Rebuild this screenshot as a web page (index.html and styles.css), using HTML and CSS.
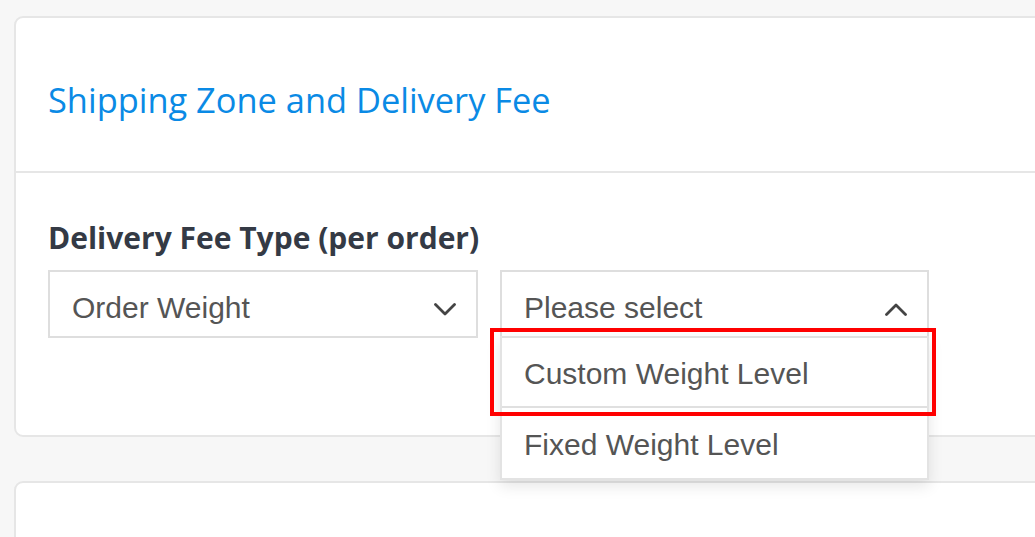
FILE: index.html
```html
<!DOCTYPE html>
<html>
<head>
<meta charset="utf-8">
<link rel="stylesheet" href="styles.css">
</head>
<body>
<div class="page">
  <section class="card">
    <header class="card-header">
      <h2 class="title">Shipping Zone and Delivery Fee</h2>
    </header>
    <div class="card-body">
      <div class="label">Delivery Fee Type (per order)</div>
      <div class="selects">
        <div class="select">
          <span class="select-text">Order Weight</span>
          <svg class="chev" width="22" height="13" viewBox="0 0 22 13"><polyline points="1.5,1.5 11,11 20.5,1.5" fill="none" stroke="#444" stroke-width="2.8" stroke-linecap="round" stroke-linejoin="round"/></svg>
        </div>
        <div class="select open">
          <span class="select-text">Please select</span>
          <svg class="chev" width="22" height="13" viewBox="0 0 22 13"><polyline points="1.5,11.5 11,2 20.5,11.5" fill="none" stroke="#444" stroke-width="2.8" stroke-linecap="round" stroke-linejoin="round"/></svg>
          <ul class="menu">
            <li class="menu-item active">Custom Weight Level</li>
            <li class="menu-item">Fixed Weight Level</li>
          </ul>
          <div class="highlight"></div>
        </div>
      </div>
    </div>
  </section>
  <section class="card card-next"></section>
</div>
</body>
</html>
```

FILE: styles.css
```css
html, body {
  margin: 0;
  padding: 0;
  background: #f7f7f7;
  overflow: hidden;
  height: 537px;
}
.page {
  padding: 16px 0 0 14px;
  width: 1100px;
}
.card {
  background: #fff;
  border: 2px solid #e6e6e6;
  border-radius: 9px;
  width: 1080px;
  box-sizing: border-box;
}
.card-header {
  padding: 59px 32px 48px 32px;
  border-bottom: 2px solid #e6e6e6;
}
.title {
  margin: 0;
  font-family: "Open Sans", sans-serif;
  font-weight: 400;
  font-size: 34.4px;
  line-height: 46px;
  color: #0a8ae5;
}
.card-body {
  padding: 48px 32px 97px 32px;
}
.label {
  font-family: "Open Sans", sans-serif;
  font-weight: 700;
  font-size: 30px;
  line-height: 34px;
  color: #343a45;
  margin-bottom: 15px;
}
.selects {
  display: flex;
  gap: 22px;
}
.select {
  position: relative;
  box-sizing: border-box;
  width: 430px;
  height: 68px;
  border: 2px solid #dedede;
  background: #fff;
  display: flex;
  align-items: center;
  justify-content: space-between;
  padding: 0 20px 0 22px;
}
.select.open {
  width: 429px;
}
.select-text {
  font-family: "Liberation Sans", Arial, sans-serif;
  font-size: 30px;
  color: #555;
  margin-top: 7px;
}
.chev {
  display: block;
  margin-top: 10px;
}
.menu {
  position: absolute;
  left: -2px;
  top: 64px;
  width: 429px;
  box-sizing: border-box;
  margin: 0;
  padding: 0;
  list-style: none;
  background: #fff;
  border: 2px solid #e3e3e3;
  border-top: none;
  box-shadow: 0 6px 14px rgba(0, 0, 0, 0.10);
  z-index: 2;
}
.menu-item {
  box-sizing: border-box;
  height: 70px;
  display: flex;
  align-items: center;
  padding: 3px 0 0 22px;
  font-family: "Liberation Sans", Arial, sans-serif;
  font-size: 30px;
  color: #555;
}
.menu-item.active {
  border-top: 2px solid #e0e0e0;
  border-bottom: 2px solid #e0e0e0;
  height: 72px;
}
.highlight {
  position: absolute;
  left: -12px;
  top: 56px;
  width: 446px;
  height: 88px;
  box-sizing: border-box;
  border: 4px solid #ff0000;
  z-index: 3;
}
.card-next {
  margin-top: 44px;
  height: 200px;
}
```
